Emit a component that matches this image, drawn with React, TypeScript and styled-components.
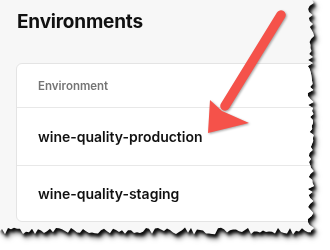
import styled, { createGlobalStyle } from 'styled-components'

const GlobalStyle = createGlobalStyle`
  html, body {
    margin: 0;
    padding: 0;
    background: #ffffff;
  }
  body {
    font-family: Inter, "Liberation Sans", Arial, sans-serif;
    -webkit-font-smoothing: antialiased;
  }
`

// rough torn-paper outline for the right and bottom edges
function tornEdge(width: number, height: number) {
  let seed = 11
  const rand = () => {
    seed = (seed * 9301 + 49297) % 233280
    return seed / 233280
  }
  const pts: string[] = ['0px 0px']
  for (let y = 0; y <= height; y += 3) {
    pts.push(`${(width + (rand() - 0.5) * 7).toFixed(1)}px ${y}px`)
  }
  for (let x = width; x >= 0; x -= 3) {
    pts.push(`${x}px ${(height + (rand() - 0.5) * 7).toFixed(1)}px`)
  }
  pts.push(`0px ${height}px`)
  return `polygon(${pts.join(', ')})`
}

const Frame = styled.div`
  position: relative;
  width: 330px;
  height: 250px;
  filter: drop-shadow(2px 3px 1.5px rgba(0, 0, 0, 0.9))
    drop-shadow(1px 2px 2px rgba(0, 0, 0, 0.6));
`

const Sheet = styled.div<{ $clip: string }>`
  width: 316px;
  height: 238px;
  background: #f7f7f7;
  clip-path: ${(p) => p.$clip};
  overflow: hidden;
  padding: 11px 0 0 16px;
  box-sizing: border-box;
`

const Title = styled.h1`
  margin: 0 0 0 1px;
  font-size: 19px;
  line-height: 22px;
  font-weight: 700;
  color: #111111;
  letter-spacing: -0.2px;
`

const Card = styled.div`
  margin-top: 30px;
  width: 330px;
  background: #ffffff;
  border: 1px solid #e4e4e4;
  border-radius: 6px;
`

const Row = styled.div<{ $height: number; $header?: boolean }>`
  display: flex;
  align-items: center;
  height: ${(p) => p.$height}px;
  padding-left: 21px;
  border-top: ${(p) => (p.$header ? 'none' : '1px solid #e8e8e8')};
  font-size: ${(p) => (p.$header ? '11.5px' : '14px')};
  font-weight: 600;
  color: ${(p) => (p.$header ? '#757575' : '#111111')};
`

const Arrow = styled.svg`
  position: absolute;
  left: 0;
  top: 0;
  width: 330px;
  height: 250px;
  pointer-events: none;
  filter: drop-shadow(1px 1px 1px rgba(0, 0, 0, 0.35));
`

export default function App() {
  return (
    <>
      <GlobalStyle />
      <Frame>
        <Sheet $clip={tornEdge(311, 231)}>
          <Title>Environments</Title>
          <Card>
            <Row $height={43} $header>
              Environment
            </Row>
            <Row $height={57}>wine-quality-production</Row>
            <Row $height={55}>wine-quality-staging</Row>
          </Card>
        </Sheet>
        <Arrow viewBox="0 0 330 250">
          <line
            x1="281"
            y1="15"
            x2="225"
            y2="106"
            stroke="#f5524a"
            strokeWidth="9.5"
            strokeLinecap="round"
          />
          <polygon points="208,133 210,100 222,111 249,123" fill="#f5524a" />
        </Arrow>
      </Frame>
    </>
  )
}
